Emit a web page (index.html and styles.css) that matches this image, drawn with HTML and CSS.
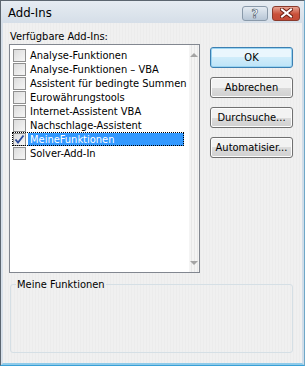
FILE: index.html
```html
<!DOCTYPE html>
<html lang="de">
<head>
    <meta charset="UTF-8">
    <title>Add-Ins</title>
    <link rel="stylesheet" href="styles.css">
</head>
<body>
    <div class="window">
        <div class="titlebar">
            <div class="title">Add-Ins</div>
            <div class="caption-buttons">
                <div class="cap-btn help">?</div>
                <div class="cap-btn close">
                    <svg width="13" height="10" viewBox="0 0 13 10">
                        <path d="M2 1.5 L11 8.5 M11 1.5 L2 8.5" stroke="#6b1d12" stroke-width="4" stroke-linecap="square"/>
                        <path d="M2 1.5 L11 8.5 M11 1.5 L2 8.5" stroke="#fff" stroke-width="2" stroke-linecap="square"/>
                    </svg>
                </div>
            </div>
        </div>

        <div class="client">
            <div class="top">
                <div class="left">
                    <div class="label">Verfügbare Add-Ins:</div>
                    <div class="listbox">
                        <ul class="items">
                            <li class="item"><span class="check"></span><span class="text">Analyse-Funktionen</span></li>
                            <li class="item"><span class="check"></span><span class="text">Analyse-Funktionen – VBA</span></li>
                            <li class="item"><span class="check"></span><span class="text">Assistent für bedingte Summen</span></li>
                            <li class="item"><span class="check"></span><span class="text">Eurowährungstools</span></li>
                            <li class="item"><span class="check"></span><span class="text">Internet-Assistent VBA</span></li>
                            <li class="item"><span class="check"></span><span class="text">Nachschlage-Assistent</span></li>
                            <li class="item selected">
                                <span class="check checked">
                                    <svg width="11" height="11" viewBox="0 0 11 11">
                                        <path d="M1.5 5.5 L4 8.5 L9.5 1.5" fill="none" stroke="#2a4a9c" stroke-width="1.8"/>
                                    </svg>
                                </span><span class="text">MeineFunktionen</span>
                            </li>
                            <li class="item"><span class="check"></span><span class="text">Solver-Add-In</span></li>
                        </ul>
                        <div class="scrollbar">
                            <span class="arrow up"></span>
                            <span class="arrow down"></span>
                        </div>
                    </div>
                </div>

                <div class="buttons">
                    <div class="btn default">OK</div>
                    <div class="btn">Abbrechen</div>
                    <div class="btn">Durchsuche...</div>
                    <div class="btn">Automatisier...</div>
                </div>
            </div>

            <fieldset class="groupbox">
                <legend>Meine Funktionen</legend>
            </fieldset>
        </div>
    </div>
</body>
</html>
```

FILE: styles.css
```css
* {
    margin: 0;
    padding: 0;
    box-sizing: border-box;
}

body {
    font-family: "DejaVu Sans Condensed", "DejaVu Sans", sans-serif;
    font-stretch: condensed;
    font-size: 11px;
    color: #000;
    background: #fff;
}

.window {
    width: 305px;
    height: 366px;
    background: #f0f0f0;
    border: 1px solid #5c6670;
    border-bottom-color: #3aa0d6;
    border-right-color: #6fa8c8;
    display: flex;
    flex-direction: column;
}

.titlebar {
    height: 22px;
    display: flex;
    align-items: center;
    justify-content: space-between;
    padding: 0 4px 0 7px;
    background: linear-gradient(#e6ecf2, #d5dee8);
}

.title {
    font-size: 13px;
    padding-top: 1px;
}

.caption-buttons {
    display: flex;
    gap: 4px;
    padding-top: 2px;
}

.cap-btn {
    height: 15px;
    border-radius: 3px;
    display: flex;
    align-items: center;
    justify-content: center;
}

.help {
    width: 26px;
    border: 1px solid #8a9aaa;
    background: linear-gradient(#e4ebf2, #b7c6d6);
    color: #fff;
    font-family: "DejaVu Sans", sans-serif;
    font-weight: bold;
    font-size: 13px;
    line-height: 13px;
    -webkit-text-stroke: 0.6px #4a5a6a;
}

.close {
    width: 28px;
    border: 1px solid #8a3a2c;
    background: linear-gradient(#e8a493, #c9503a 55%, #c34a36);
}

.client {
    flex: 1;
    padding: 0 3px 4px 3px;
    display: flex;
    flex-direction: column;
    background: repeating-linear-gradient(90deg, #f0f0f0 0 2px, #ececec 2px 3px);
    border-left: 2px solid #d7e0ea;
    border-right: 2px solid #d0dde9;
    border-bottom: 2px solid #8fcbea;
}

.top {
    display: flex;
    gap: 10px;
}

.left {
    width: 194px;
    display: flex;
    flex-direction: column;
}

.label {
    padding: 7px 0 0 4px;
    height: 21px;
}

.listbox {
    margin-left: 3px;
    height: 229px;
    border: 1px solid #828790;
    background: #fff;
    display: flex;
}

.items {
    list-style: none;
    flex: 1;
    padding: 3px 0 0 2px;
}

.item {
    height: 14px;
    display: flex;
    align-items: center;
    gap: 2px;
    white-space: nowrap;
}

.check {
    width: 13px;
    height: 13px;
    margin-left: 1px;
    border: 1px solid #8f8f8f;
    background: linear-gradient(135deg, #dcdcdc, #f6f6f6);
    display: flex;
    align-items: center;
    justify-content: center;
}

.text {
    padding: 0 2px;
    line-height: 13px;
}

.selected {
    outline: 1px dotted #000;
    outline-offset: -1px;
    width: 172px;
}

.selected .text {
    flex: 1;
    background: #3399ff;
    color: #fff;
}

.scrollbar {
    width: 17px;
    background: repeating-linear-gradient(90deg, #f4f4f4 0 2px, #e8e8e8 2px 3px);
    display: flex;
    flex-direction: column;
    justify-content: space-between;
    align-items: center;
    padding: 8px 0 7px;
}

.arrow {
    width: 0;
    height: 0;
    border-left: 4px solid transparent;
    border-right: 4px solid transparent;
}

.arrow.up {
    border-bottom: 4px solid #a4a4a4;
}

.arrow.down {
    border-top: 4px solid #a4a4a4;
}

.buttons {
    padding-top: 24px;
    display: flex;
    flex-direction: column;
    gap: 9px;
}

.btn {
    width: 83px;
    height: 21px;
    border: 1px solid #707070;
    border-radius: 3px;
    background: linear-gradient(#f2f2f2 50%, #dcdcdc 50%, #d0d0d0);
    display: flex;
    align-items: center;
    justify-content: center;
    box-shadow: inset 0 0 0 1px #fcfcfc;
    white-space: nowrap;
}

.btn.default {
    border-color: #3c7fb1;
    background: linear-gradient(#eaf6fd 50%, #d0ecfa 50%, #bde4f8);
    box-shadow: inset 0 0 0 1px #9ad4f2;
}

.groupbox {
    margin: 5px 6px 0 4px;
    height: 75px;
    border: 1px solid #d5dfe5;
    border-radius: 3px;
    padding: 0 4px;
}

.groupbox legend {
    padding: 0 1px;
    margin-left: 1px;
}
```
